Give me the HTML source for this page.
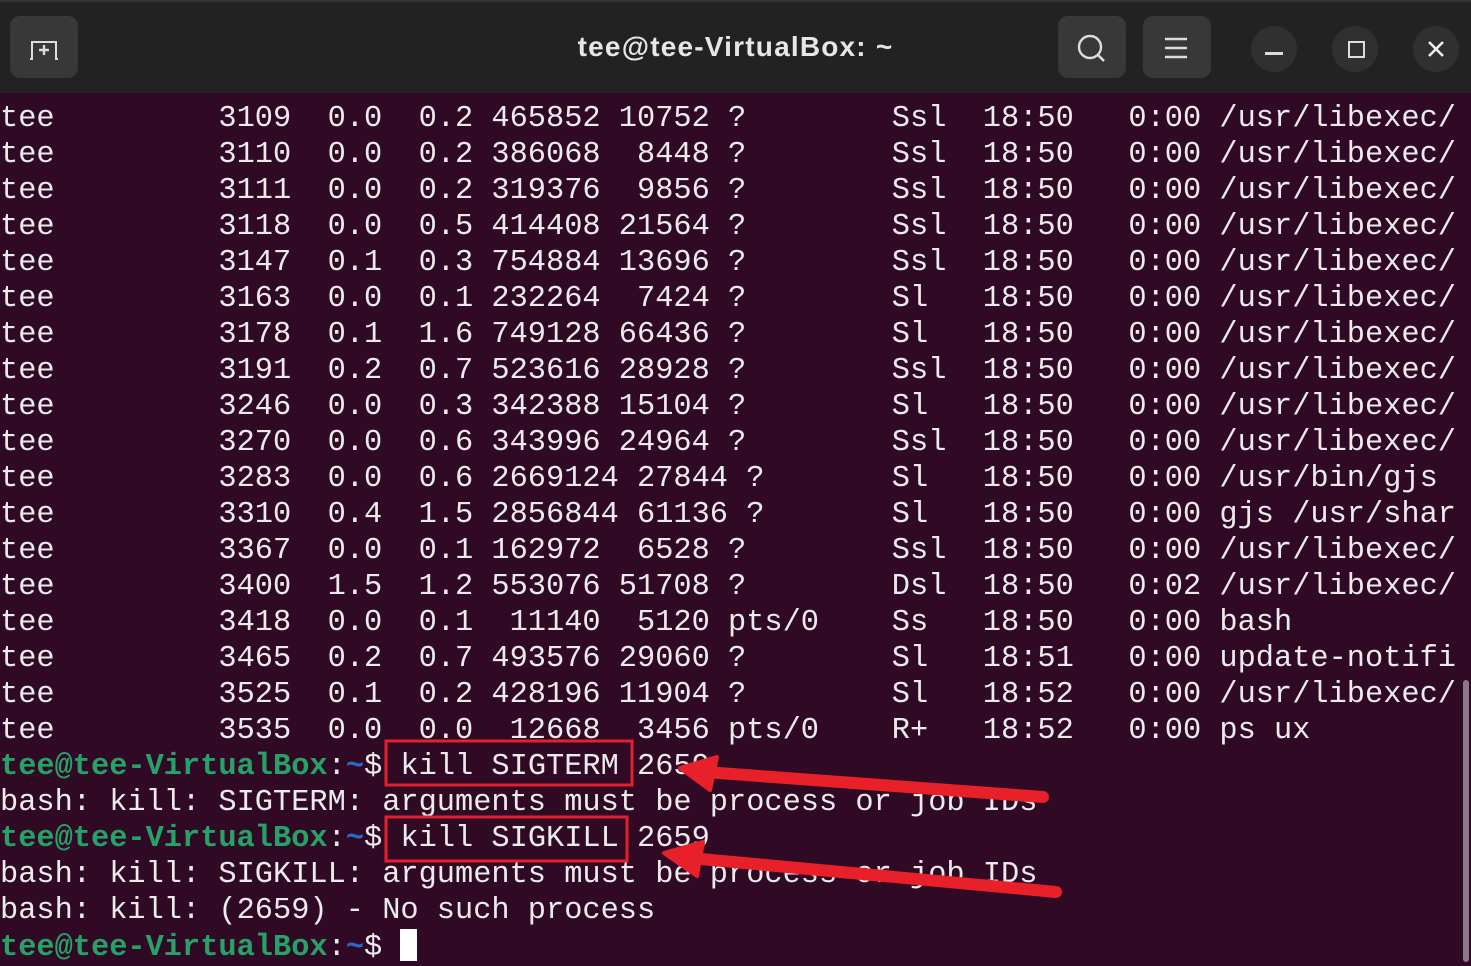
<!DOCTYPE html>
<html><head><style>
html,body{margin:0;padding:0;width:1471px;height:962px;overflow:hidden;background:#300a24;}
.bar{position:absolute;left:0;top:0;width:1471px;height:93px;background:#222222;border-top:2px solid #333;box-sizing:border-box;}
.btn{position:absolute;background:#383838;border-radius:10px;}
.circ{position:absolute;width:46px;height:46px;border-radius:50%;background:#303030;top:24px;}
.title{position:absolute;top:29px;left:0;width:1471px;text-align:center;color:#e6e6e6;font:bold 28px "Liberation Sans",sans-serif;letter-spacing:1.2px}
pre{position:absolute;left:0;top:101px;margin:0;font:30.33px/36px "Liberation Mono",monospace;color:#ebebeb;white-space:pre;}
.g{color:#26a269;font-weight:bold}.b{color:#2a6ac8;font-weight:bold}
.cur{display:inline-block;width:17px;height:32px;background:#fff;vertical-align:-6px}
</style></head><body>
<div class="bar">
<div class="btn" style="left:10px;top:14px;width:68px;height:62px"></div>
<svg style="position:absolute;left:28px;top:34px" width="34" height="26" viewBox="0 0 34 26"><path d="M2 23h2V6h24v17h2" fill="none" stroke="#ddd" stroke-width="2"/><path d="M16 9v10M11 14h10" stroke="#ddd" stroke-width="2.4"/></svg>
<div class="title">tee@tee-VirtualBox: ~</div>
<div class="btn" style="left:1058px;top:14px;width:68px;height:62px"></div>
<svg style="position:absolute;left:1075px;top:30px" width="34" height="34"><circle cx="15" cy="15" r="11" fill="none" stroke="#ddd" stroke-width="2.4"/><path d="M23 23l6 6" stroke="#ddd" stroke-width="2.6"/></svg>
<div class="btn" style="left:1143px;top:14px;width:68px;height:62px"></div>
<svg style="position:absolute;left:1163px;top:34px" width="28" height="24"><path d="M2 3h22M2 12h22M2 21h22" stroke="#ddd" stroke-width="2.4"/></svg>
<div class="circ" style="left:1251px"></div>
<div style="position:absolute;left:1265px;top:50px;width:18px;height:3px;background:#ddd"></div>
<div class="circ" style="left:1332px"></div>
<div style="position:absolute;left:1348px;top:39px;width:13px;height:13px;border:2.5px solid #ddd"></div>
<div class="circ" style="left:1413px"></div>
<svg style="position:absolute;left:1427px;top:38px" width="18" height="18"><path d="M2 2l14 14M16 2L2 16" stroke="#eee" stroke-width="2.6"/></svg>
</div>
<pre>tee         3109  0.0  0.2 465852 10752 ?        Ssl  18:50   0:00 /usr/libexec/
tee         3110  0.0  0.2 386068  8448 ?        Ssl  18:50   0:00 /usr/libexec/
tee         3111  0.0  0.2 319376  9856 ?        Ssl  18:50   0:00 /usr/libexec/
tee         3118  0.0  0.5 414408 21564 ?        Ssl  18:50   0:00 /usr/libexec/
tee         3147  0.1  0.3 754884 13696 ?        Ssl  18:50   0:00 /usr/libexec/
tee         3163  0.0  0.1 232264  7424 ?        Sl   18:50   0:00 /usr/libexec/
tee         3178  0.1  1.6 749128 66436 ?        Sl   18:50   0:00 /usr/libexec/
tee         3191  0.2  0.7 523616 28928 ?        Ssl  18:50   0:00 /usr/libexec/
tee         3246  0.0  0.3 342388 15104 ?        Sl   18:50   0:00 /usr/libexec/
tee         3270  0.0  0.6 343996 24964 ?        Ssl  18:50   0:00 /usr/libexec/
tee         3283  0.0  0.6 2669124 27844 ?       Sl   18:50   0:00 /usr/bin/gjs
tee         3310  0.4  1.5 2856844 61136 ?       Sl   18:50   0:00 gjs /usr/shar
tee         3367  0.0  0.1 162972  6528 ?        Ssl  18:50   0:00 /usr/libexec/
tee         3400  1.5  1.2 553076 51708 ?        Dsl  18:50   0:02 /usr/libexec/
tee         3418  0.0  0.1  11140  5120 pts/0    Ss   18:50   0:00 bash
tee         3465  0.2  0.7 493576 29060 ?        Sl   18:51   0:00 update-notifi
tee         3525  0.1  0.2 428196 11904 ?        Sl   18:52   0:00 /usr/libexec/
tee         3535  0.0  0.0  12668  3456 pts/0    R+   18:52   0:00 ps ux
<span class="g">tee@tee-VirtualBox</span>:<span class="b">~</span>$ kill SIGTERM 2659
bash: kill: SIGTERM: arguments must be process or job IDs
<span class="g">tee@tee-VirtualBox</span>:<span class="b">~</span>$ kill SIGKILL 2659
bash: kill: SIGKILL: arguments must be process or job IDs
bash: kill: (2659) - No such process
<span class="g">tee@tee-VirtualBox</span>:<span class="b">~</span>$ <span class="cur"></span></pre>
<div style="position:absolute;left:1463px;top:680px;width:6px;height:282px;background:#8a7a85;border-radius:3px"></div>
<svg style="position:absolute;left:0;top:0" width="1471" height="962">
<rect x="386" y="741" width="246" height="44" fill="none" stroke="#e3202b" stroke-width="3"/>
<rect x="386" y="817" width="241" height="44" fill="none" stroke="#e3202b" stroke-width="3"/>
<path d="M1043 797L705 772" stroke="#e8202a" stroke-width="12" stroke-linecap="round"/>
<path d="M680 768L717 757L710 790Z" fill="#e8202a" stroke="#e8202a" stroke-width="4" stroke-linejoin="round"/>
<path d="M1056 892L690 858" stroke="#e8202a" stroke-width="12" stroke-linecap="round"/>
<path d="M664 853L703 842L697 876Z" fill="#e8202a" stroke="#e8202a" stroke-width="4" stroke-linejoin="round"/>
</svg>
</body></html>
